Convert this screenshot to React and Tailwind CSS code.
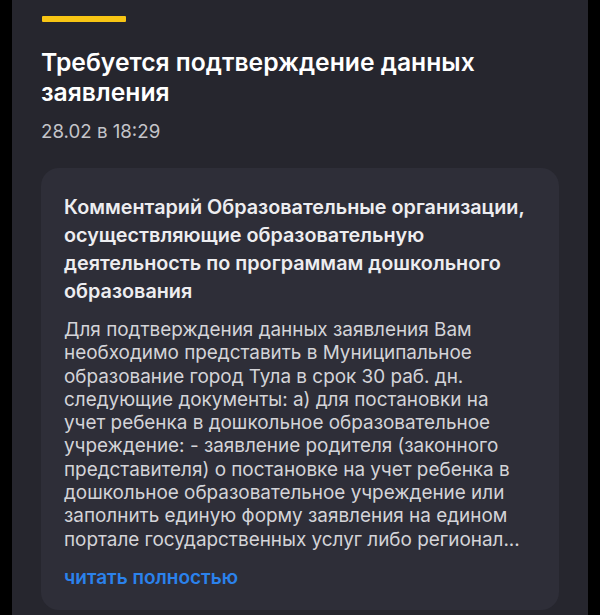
import React from 'react'

const bodyLines = [
  'Для подтверждения данных заявления Вам',
  'необходимо представить в Муниципальное',
  'образование город Тула в срок 30 раб. дн.',
  'следующие документы: а) для постановки на',
  'учет ребенка в дошкольное образовательное',
  'учреждение: - заявление родителя (законного',
  'представителя) о постановке на учет ребенка в',
  'дошкольное образовательное учреждение или',
  'заполнить единую форму заявления на едином',
  'портале государственных услуг либо регионал...',
]

const App = () => {
  return (
    <div className="h-[615px] overflow-hidden bg-black" style={{ fontFamily: 'Inter, "Noto Sans", sans-serif' }}>
      <div className="mx-[12px] h-[615px] bg-[#26262e] px-[29px] pt-[16px]">
        {/* yellow accent */}
        <div className="ml-[1px] h-[6px] w-[84px] rounded-[1px] bg-[#f7c514]" />

        <h1 className="mt-[25px] text-[24.7px] font-semibold leading-[30px] text-white">
          Требуется подтверждение данных
          <br />
          заявления
        </h1>

        <p className="mt-[13px] text-[18.7px] leading-[24px] text-[#c4c4c9]">28.02 в 18:29</p>

        <div className="mt-[24px] rounded-[18px] bg-[#2e2e38] px-[23px] pt-[25px] pb-[20px]">
          <h2 className="text-[19.8px] font-semibold leading-[28px] text-[#ededf0]">
            Комментарий Образовательные организации,
            <br />
            осуществляющие образовательную
            <br />
            деятельность по программам дошкольного
            <br />
            образования
          </h2>

          <p className="mt-[13px] text-[18.9px] leading-[23.3px] text-[#d4d4d8]">
            {bodyLines.map((line, i) => (
              <span key={i} className="block whitespace-nowrap">
                {line}
              </span>
            ))}
          </p>

          <button className="mt-[15px] text-[19px] font-semibold leading-[24px] text-[#2b82ec]">
            читать полностью
          </button>
        </div>
      </div>
    </div>
  )
}

export default App
